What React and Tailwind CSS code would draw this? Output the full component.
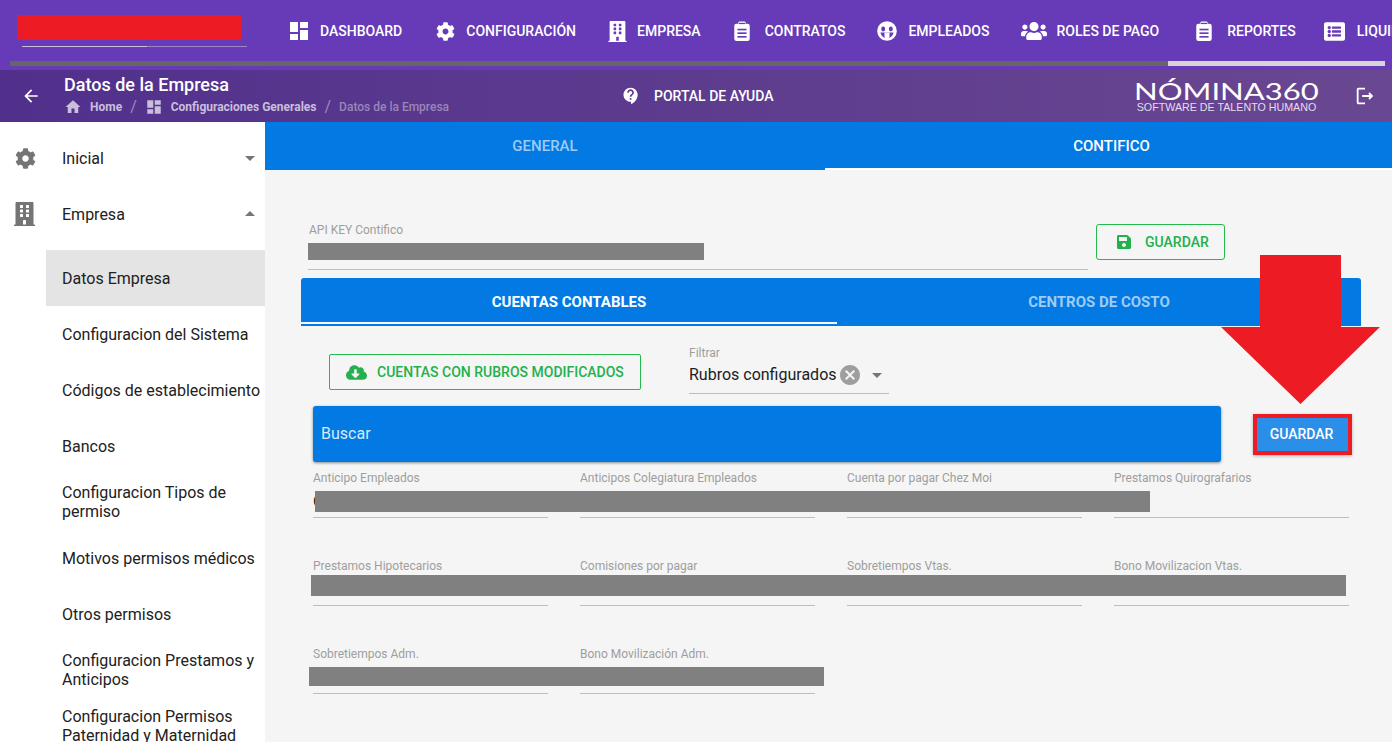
import React from 'react';
import {
  MdDashboard,
  MdArrowBack,
  MdHome,
  MdContactSupport,
  MdArrowDropDown,
  MdArrowDropUp,
  MdCancel,
  MdOutlineLogout
} from 'react-icons/md';
import {
  FaCog,
  FaBuilding,
  FaUsers,
  FaListAlt,
  FaSave,
  FaCloudDownloadAlt
} from 'react-icons/fa';

// los iconos de portapapeles y empleado no existen igual en los paquetes
const ClipboardIcon = ({ className }) => (
  <svg className={className} width="18" height="20" viewBox="0 0 18 22" fill="none">
    <rect x="0.5" y="3" width="17" height="19" rx="2.5" fill="#fff" />
    <rect x="5" y="0.5" width="8" height="5" rx="1.5" fill="#fff" />
    <rect x="5.5" y="2" width="7" height="1.4" fill="#673ab7" />
    <rect x="4" y="8.5" width="10" height="1.8" fill="#673ab7" />
    <rect x="4" y="12.5" width="10" height="1.8" fill="#673ab7" />
    <rect x="4" y="16.5" width="10" height="1.8" fill="#673ab7" />
  </svg>
);

const FaceIcon = ({ className }) => (
  <svg className={className} width="20" height="20" viewBox="0 0 20 20" fill="none">
    <circle cx="10" cy="10" r="9.8" fill="#fff" />
    <ellipse cx="6.2" cy="8" rx="2" ry="2.4" fill="#673ab7" />
    <ellipse cx="13.8" cy="8" rx="2" ry="2.4" fill="#673ab7" />
    <path d="M3.5 11.5 H16.5 C16 15 13.500 17 10 17 C6.500 17 4 15 3.500 11.500 Z" fill="#673ab7" />
    <path d="M7.500 11.500 H12.500 V16.500 C11 17.500 9 17.500 7.500 16.500 Z" fill="#fff" />
  </svg>
);

const navItems = [
  { label: 'DASHBOARD', Icon: MdDashboard, icon: 'text-[24px]', gap: 'gap-[9px]', pl: 'pl-0' },
  { label: 'CONFIGURACIÓN', Icon: FaCog, icon: 'text-[19px]', gap: 'gap-[11px]', pl: 'pl-[34px]' },
  { label: 'EMPRESA', Icon: FaBuilding, icon: 'text-[21px]', gap: 'gap-[9px]', pl: 'pl-[31px]' },
  { label: 'CONTRATOS', Icon: ClipboardIcon, icon: '', gap: 'gap-[14px]', pl: 'pl-[32px]' },
  { label: 'EMPLEADOS', Icon: FaceIcon, icon: '', gap: 'gap-[11px]', pl: 'pl-[32px]' },
  { label: 'ROLES DE PAGO', Icon: FaUsers, icon: 'text-[26px]', gap: 'gap-[9px]', pl: 'pl-[32px]' },
  { label: 'REPORTES', Icon: ClipboardIcon, icon: '', gap: 'gap-[14px]', pl: 'pl-[36px]' },
  { label: 'LIQUIDACIONES', Icon: FaListAlt, icon: 'text-[21px]', gap: 'gap-[12px]', pl: 'pl-[28px]' }
];

const menuItems = [
  'Configuracion del Sistema',
  'Códigos de establecimiento',
  'Bancos',
  'Configuracion Tipos de permiso',
  'Motivos permisos médicos',
  'Otros permisos',
  'Configuracion Prestamos y Anticipos',
  'Configuracion Permisos Paternidad y Maternidad'
];

const fieldRows = [
  { labels: ['Anticipo Empleados', 'Anticipos Colegiatura Empleados', 'Cuenta por pagar Chez Moi', 'Prestamos Quirografarios'], bar: 'left-[2px] top-[25px] w-[835px] h-[21px]', value: 'C' },
  { labels: ['Prestamos Hipotecarios', 'Comisiones por pagar', 'Sobretiempos Vtas.', 'Bono Movilizacion Vtas.'], bar: '-left-[2px] top-[21px] w-[1035px] h-[21px]' },
  { labels: ['Sobretiempos Adm.', 'Bono Movilización Adm.'], bar: '-left-[4px] top-[25px] w-[515px] h-[19px]' }
];

const Header = () => (
  <div className="h-[70px] bg-[#673ab7] relative overflow-hidden">
    <div className="flex h-[61px]">
      <div className="w-[271px] shrink-0 pl-[17px] pt-[15px]">
        <div className="w-[224px] h-[25px] bg-[#ed1c24]" />
        <div className="ml-[5px] mt-[6px] w-[225px] h-px bg-[#9d87c9]">
          <div className="w-[125px] h-px bg-[#c9bfdc]" />
        </div>
      </div>
      <div className="flex items-center pl-[16px] pt-[1px] text-white text-[14px] font-medium whitespace-nowrap">
        {navItems.map(({ label, Icon, icon, gap, pl }) => (
          <div key={label} className={`flex items-center shrink-0 ${gap} ${pl}`}>
            <Icon className={`shrink-0 ${icon}`} />
            <span>{label}</span>
          </div>
        ))}
      </div>
    </div>
    <div className="ml-[10px] mr-[7px] h-[5px] bg-[#666666] flex justify-end">
      <div className="w-[217px] bg-[#d6d6d6]" />
    </div>
  </div>
);

const SubHeader = () => (
  <div className="h-[52px] bg-gradient-to-r from-[#51308c] to-[#6a4791] flex items-center text-white relative">
    <MdArrowBack className="text-[20px] ml-[21px] shrink-0" />
    <div className="ml-[23px] w-[534px] shrink-0 -mt-[3px]">
      <div className="text-[18px] font-medium leading-[21px]">Datos de la Empresa</div>
      <div className="flex items-center text-[12px] font-bold leading-[14px] mt-[3px] text-[#c9bfdc]">
        <MdHome className="text-[18px] mr-[8px]" />
        <span>Home</span>
        <span className="mx-[8px] text-[16px] font-normal text-[#9d8abc]">/</span>
        <MdDashboard className="text-[18px] mr-[8px]" />
        <span>Configuraciones Generales</span>
        <span className="mx-[8px] text-[16px] font-normal text-[#9d8abc]">/</span>
        <span className="font-medium text-[#9a87b8]">Datos de la Empresa</span>
      </div>
    </div>
    <MdContactSupport className="text-[20px] ml-[23px]" />
    <span className="ml-[13px] text-[14px] font-medium">PORTAL DE AYUDA</span>
    <div className="ml-auto mr-[37px] w-[181px] flex flex-col items-center leading-none whitespace-nowrap">
      <span className="text-[23px] leading-[20px] font-['Lato'] scale-x-[1.35]">NÓMINA360</span>
      <span className="text-[10.7px] leading-[9px] mt-[2px] font-['Liberation_Sans'] text-[#e4dcf0]">SOFTWARE DE TALENTO HUMANO</span>
    </div>
    <MdOutlineLogout className="text-[22px] mr-[16px]" />
  </div>
);

const Sidebar = () => (
  <aside className="w-[265px] shrink-0 bg-white pt-[8px] text-[16px] text-[#212121] leading-[19px] overflow-hidden">
    <div className="h-[56px] flex items-center pl-[15px] pr-[3px]">
      <FaCog className="text-[21px] text-[#757575] w-[21px]" />
      <span className="ml-[26px]">Inicial</span>
      <MdArrowDropDown className="ml-auto text-[24px] text-[#757575]" />
    </div>
    <div className="h-[56px] flex items-center pl-[14px] pr-[3px]">
      <FaBuilding className="text-[24px] text-[#757575] w-[21px]" />
      <span className="ml-[27px]">Empresa</span>
      <MdArrowDropUp className="ml-auto text-[24px] text-[#757575]" />
    </div>
    <div className="ml-[46px] mt-[8px] h-[56px] flex items-center pl-[16px] bg-[#e4e4e4]">Datos Empresa</div>
    {menuItems.map((item) => (
      <div key={item} className="ml-[46px] h-[56px] flex items-center pl-[16px] pr-[4px]">
        <span>{item}</span>
      </div>
    ))}
  </aside>
);

const Field = ({ label, value }) => (
  <div className="h-[52px] border-b border-[#bdbdbd]">
    <div className="text-[12px] leading-[14px] pt-[5px] box-content text-[#9e9e9e]">{label}</div>
    {value && <div className="text-[16px] leading-[19px] mt-[7px] text-[#212121]">{value}</div>}
  </div>
);

const App = () => (
  <div className="relative w-[1392px] h-[742px] overflow-hidden bg-white font-['Roboto',sans-serif]">
    <Header />
    <SubHeader />
    <div className="flex h-[620px]">
      <Sidebar />
      <main className="flex-1 bg-[#f5f5f5] overflow-hidden">
        <div className="flex h-[48px] bg-[#0279e3] text-[15px] font-medium">
          <div className="w-[560px] flex items-center justify-center pt-[1px] text-[#9fcbf4]">GENERAL</div>
          <div className="flex-1 flex items-center justify-center pl-[6px] pt-[3px] text-white border-b-2 border-white">CONTIFICO</div>
        </div>

        <div className="flex items-start pl-[43px] pt-[54px] h-[108px]">
          <div className="relative w-[780px] h-[46px] border-b border-[#bdbdbd]">
            <div className="text-[12px] leading-[14px] -mt-[1px] text-[#9e9e9e] pl-px">API KEY Contifico</div>
            <div className="absolute left-0 top-[19px] w-[396px] h-[17px] bg-[#808080]" />
          </div>
          <button className="ml-[8px] w-[129px] h-[36px] flex items-center border border-[#22bb4c] rounded-[3px] text-[#22b14c] text-[14px] font-medium">
            <FaSave className="ml-[19px] text-[16px]" />
            <span className="ml-[13px]">GUARDAR</span>
          </button>
        </div>

        <div className="ml-[36px] w-[1060px] flex h-[48px] bg-[#0279e3] rounded-t-[3px] text-[15px] font-bold">
          <div className="w-[536px] h-[46px] flex items-center justify-center pt-[4px] text-white border-b-2 border-[#f5f5f5]">CUENTAS CONTABLES</div>
          <div className="flex-1 flex items-center justify-center text-[#9fcbf4]">CENTROS DE COSTO</div>
        </div>

        <div className="flex pl-[64px] pt-[18px] h-[80px]">
          <button className="mt-[10px] w-[312px] h-[36px] flex items-center border border-[#22bb4c] rounded-[2px] text-[#22b14c] text-[14px] font-medium">
            <FaCloudDownloadAlt className="ml-[16px] text-[21px]" />
            <span className="ml-[10px] pt-[1px]">CUENTAS CON RUBROS MODIFICADOS</span>
          </button>
          <div className="ml-[48px] w-[200px] h-[50px] border-b border-[#bdbdbd]">
            <div className="text-[12px] leading-[14px] mt-[2px] text-[#9e9e9e]">Filtrar</div>
            <div className="flex items-center mt-[4px] h-[22px] text-[16px] text-[#212121]">
              <span>Rubros configurados</span>
              <MdCancel className="text-[24px] ml-[1px] text-[#9e9e9e]" />
              <MdArrowDropDown className="text-[24px] ml-[3px] text-[#757575]" />
            </div>
          </div>
        </div>

        <div className="flex items-center pl-[48px] h-[56px]">
          <div className="w-[908px] h-[56px] flex items-center pl-[8px] bg-[#0279e3] rounded-[3px] shadow-[0_1px_3px_rgba(0,0,0,0.45)] text-[16px] text-[#d7e9fa]">Buscar</div>
          <div className="ml-[32px] border-[4px] border-[#ed1c24] shadow-[0_1px_3px_rgba(0,0,0,0.3)]">
            <button className="block w-[91px] h-[33px] pr-[2px] bg-[#2b8ee8] text-white text-[14px] font-medium">GUARDAR</button>
          </div>
        </div>

        <div className="ml-[48px] mt-[4px]">
          {fieldRows.map((row) => (
            <div key={row.labels[0]} className="relative grid grid-cols-[235px_235px_235px_235px] gap-x-[32px] h-[88px]">
              {row.labels.map((label, i) => (
                <Field key={label} label={label} value={i === 0 ? row.value : null} />
              ))}
              <div className={`absolute bg-[#808080] ${row.bar}`} />
            </div>
          ))}
        </div>
      </main>
    </div>

    <svg className="absolute left-[1221px] top-[255px]" width="160" height="150" viewBox="0 0 160 150">
      <polygon points="39,0 120,0 120,72 159,72 79.5,149 0,72 39,72" fill="#ed1c24" />
    </svg>
  </div>
);

export default App;
